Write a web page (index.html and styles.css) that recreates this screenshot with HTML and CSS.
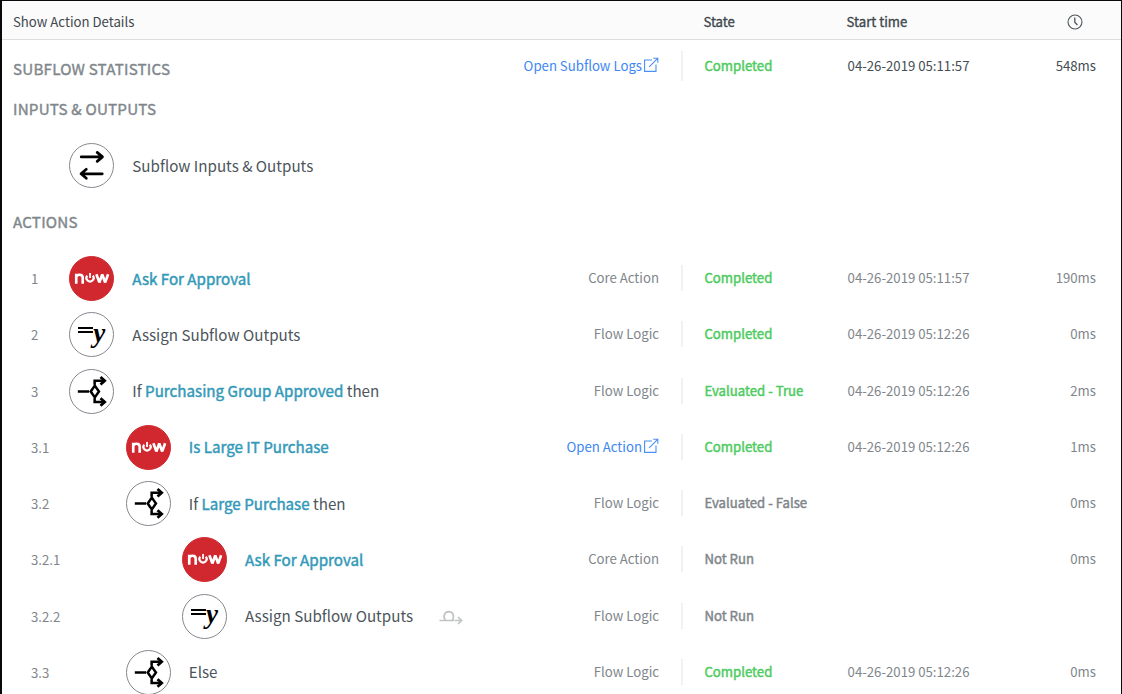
FILE: index.html
```html
<!DOCTYPE html>
<html lang="en">
<head>
<meta charset="utf-8">
<title>Show Action Details</title>
<link rel="stylesheet" href="styles.css">
</head>
<body>
<svg class="defs" width="0" height="0">
  <symbol id="io" viewBox="0 0 46 46"><g fill="none" stroke="#000" stroke-width="2.8" stroke-linecap="round" stroke-linejoin="round"><path d="M12.5 14.2H34M28.8 9.6L34.2 14.2L28.8 18.8M34 31.5H12.5M17.7 26.9L12.3 31.5L17.7 36.1"/></g></symbol>
  <symbol id="branch" viewBox="0 0 46 46"><g fill="none" stroke="#000" stroke-width="2.6" stroke-linejoin="miter"><path d="M9 23H20.5M26.4 17L30.6 23L26.4 29L22.2 23ZM26.2 16V12H36.5M26.2 30V33.7H36.5"/><path d="M32.2 8.2L36.5 12L32.2 15.8M32.2 29.9L36.5 33.7L32.2 37.5" stroke-width="2.8"/></g></symbol>
  <symbol id="now" viewBox="0 0 46 46"><g fill="none" stroke="#fff" stroke-width="2.7"><path d="M7.4 28.3V18.2M7.4 22C7.6 18.2 14 18.2 14 22.2V28.3"/><path d="M28 18.6L31 27L34 19L37 27L40 18.6" stroke-linejoin="bevel"/><path d="M18.6 20A3.7 3.7 0 1 0 24.4 20" stroke-width="2.2"/><path d="M21.5 17.5V22.6" stroke-width="1.8"/></g></symbol>
  <symbol id="open" viewBox="0 0 16 16"><g fill="none" stroke="#4a90f5" stroke-width="1.1"><path d="M9 3H1.6V14.4H13V7.5M6.2 9.8L14.6 1.4M10.2 1.2H14.8V5.8"/></g></symbol>
</svg>
<main class="panel">
  <header class="row head">
    <div class="title">Show Action Details</div>
    <div class="state">State</div>
    <div class="time">Start time</div>
    <div class="clock"><svg width="16" height="16" viewBox="0 0 16 16" fill="none" stroke="#4d565c" stroke-width="1.1"><circle cx="8" cy="8" r="7"/><path d="M7.8 3.6V8.3L10.4 11" stroke-width="1.3"/></svg></div>
  </header>
  <section class="row stats">
    <h2>SUBFLOW STATISTICS</h2>
    <a class="kind link">Open Subflow Logs<svg class="ext"><use href="#open"/></svg></a>
    <div class="state done">Completed</div>
    <div class="time">04-26-2019 05:11:57</div>
    <div class="dur">548ms</div>
  </section>
  <h2 class="inputs">INPUTS &amp; OUTPUTS</h2>
  <div class="row io"><div class="num"></div><div class="name"><span class="icon"><svg><use href="#io"/></svg></span><span>Subflow Inputs &amp; Outputs</span></div></div>
  <h2 class="actions">ACTIONS</h2>
  <div class="list">
    <div class="row"><div class="num">1</div><div class="name"><span class="icon red"><svg><use href="#now"/></svg></span><b>Ask For Approval</b></div><div class="kind">Core Action</div><div class="state done">Completed</div><div class="time">04-26-2019 05:11:57</div><div class="dur">190ms</div></div>
    <div class="row"><div class="num">2</div><div class="name"><span class="icon assign"><i class="eq"></i><i class="y">y</i></span><span>Assign Subflow Outputs</span></div><div class="kind">Flow Logic</div><div class="state done">Completed</div><div class="time">04-26-2019 05:12:26</div><div class="dur">0ms</div></div>
    <div class="row"><div class="num">3</div><div class="name"><span class="icon"><svg><use href="#branch"/></svg></span><span>If <b>Purchasing Group Approved</b> then</span></div><div class="kind">Flow Logic</div><div class="state done">Evaluated - True</div><div class="time">04-26-2019 05:12:26</div><div class="dur">2ms</div></div>
    <div class="row"><div class="num">3.1</div><div class="name in1"><span class="icon red"><svg><use href="#now"/></svg></span><b>Is Large IT Purchase</b></div><a class="kind link">Open Action<svg class="ext"><use href="#open"/></svg></a><div class="state done">Completed</div><div class="time">04-26-2019 05:12:26</div><div class="dur">1ms</div></div>
    <div class="row"><div class="num">3.2</div><div class="name in1"><span class="icon"><svg><use href="#branch"/></svg></span><span>If <b>Large Purchase</b> then</span></div><div class="kind">Flow Logic</div><div class="state">Evaluated - False</div><div class="time"></div><div class="dur">0ms</div></div>
    <div class="row"><div class="num">3.2.1</div><div class="name in2"><span class="icon red"><svg><use href="#now"/></svg></span><b>Ask For Approval</b></div><div class="kind">Core Action</div><div class="state">Not Run</div><div class="time"></div><div class="dur">0ms</div></div>
    <div class="row"><div class="num">3.2.2</div><div class="name in2"><span class="icon assign"><i class="eq"></i><i class="y">y</i></span><span>Assign Subflow Outputs</span><svg class="skip" width="24" height="16" viewBox="0 0 24 16" fill="none" stroke="#bfc1c2" stroke-width="1.6"><path d="M.5 11.5H15M6.2 11.2C3.5 6.5 6 2.6 9.8 2.6S16 6.5 13.4 11.2M15.5 11.5H22.4M19 8L22.6 11.5L19 15"/></svg></div><div class="kind">Flow Logic</div><div class="state">Not Run</div><div class="time"></div><div class="dur"></div></div>
    <div class="row"><div class="num">3.3</div><div class="name in1"><span class="icon"><svg><use href="#branch"/></svg></span><span>Else</span></div><div class="kind">Flow Logic</div><div class="state done">Completed</div><div class="time">04-26-2019 05:12:26</div><div class="dur">0ms</div></div>
  </div>
</main>
</body>
</html>
```
FILE: styles.css
```css
* { box-sizing: border-box; }
body {
  margin: 0;
  height: 694px;
  overflow: hidden;
  background: #fff;
  font: 13.2px/20px "Noto Sans CJK SC", "Noto Sans", sans-serif;
  color: #7f868b;
}
.defs { display: block; }
.panel {
  height: 694px;
  overflow: hidden;
  border: solid #08080d;
  border-width: 1px 1px 0 2px;
}
.row {
  display: grid;
  grid-template-columns: 29px 480px 148px 45.4px 143.2px 151.4px 98px;
  grid-template-areas: ". name kind . state time dur";
  align-items: center;
}
.head {
  height: 39px;
  background: #fbfbfb;
  border-bottom: 1px solid #dcdedf;
  color: #3f474c;
  padding-top: 3px;
}
.title { grid-column: 1 / 4; grid-row: 1; padding-left: 11px; }
.head .state, .head .time { margin-left: -1px; color: #3f474c; -webkit-text-stroke: .35px; }
.clock { grid-area: dur; justify-self: end; display: flex; margin: 1px 14px 0 0; }
.stats { height: 54px; padding-bottom: 2px; }
h2 {
  margin: 0;
  padding-left: 11px;
  font-size: 15.2px;
  line-height: 20px;
  font-weight: 400;
  letter-spacing: .2px;
  -webkit-text-stroke: .4px;
  color: #7f878c;
  white-space: nowrap;
}
.stats h2 { grid-column: 1 / 3; grid-row: 1; padding-top: 4px; }
.stats .time, .stats .dur { color: #444d52; }
.inputs { margin-top: 4px; }
.io { height: 56px; margin-top: 18px; }
.io .name { margin-top: 2px; }
.actions { margin-top: 19px; }
.list { margin-top: 19px; }
.list .row { height: 56.25px; margin-top: 0; }
.num { grid-column: 1 / 3; grid-row: 1; padding: 2px 0 0 29px; }
.name {
  grid-area: name;
  display: flex;
  align-items: center;
  gap: 18px;
  padding-left: 38.3px;
  font-size: 15.17px;
  color: #4c555b;
  white-space: nowrap;
}
.name > :not(.icon) { margin-top: -1px; }
.in1 { padding-left: 94.8px; }
.in2 { padding-left: 151px; }
.name b { font-weight: 400; color: #3399b8; -webkit-text-stroke: .45px; }
.icon {
  width: 45px;
  height: 45px;
  flex: none;
  border: 1px solid #85898e;
  border-radius: 50%;
  display: flex;
  align-items: center;
  justify-content: center;
}
.list .icon { margin-top: 1px; }
.icon svg { width: 45px; height: 45px; flex: none; }
.red { background: #d1272e; border-color: #d1272e; }
.assign { gap: 0; }
.eq { width: 15px; height: 6px; border: solid #000; border-width: 2px 0; margin-top: -9px; }
.y { font: italic bold 27px/30px "Liberation Serif", serif; color: #000; margin-top: -4px; }
.name .skip { margin: 2px 0 0 8px; }
.kind { grid-area: kind; text-align: right; white-space: nowrap; }
.link { display: flex; justify-content: flex-end; align-items: center; gap: 1px; color: #3c86f4; }
.ext { width: 16px; height: 16px; margin-top: -2px; }
.state {
  grid-area: state;
  position: relative;
  white-space: nowrap;
  -webkit-text-stroke: .45px;
}
.state::before {
  content: "";
  position: absolute;
  left: -23px;
  top: -3px;
  width: 2px;
  height: 26px;
  background: #f0f1f1;
}
.stats .state::before { top: -5px; height: 30px; }
.head .state::before { display: none; }
.done { color: #4ecb5f; }
.time { grid-area: time; white-space: nowrap; }
.dur { grid-area: dur; text-align: right; }
.stats .dur, .list .dur { width: 97px; }
```
